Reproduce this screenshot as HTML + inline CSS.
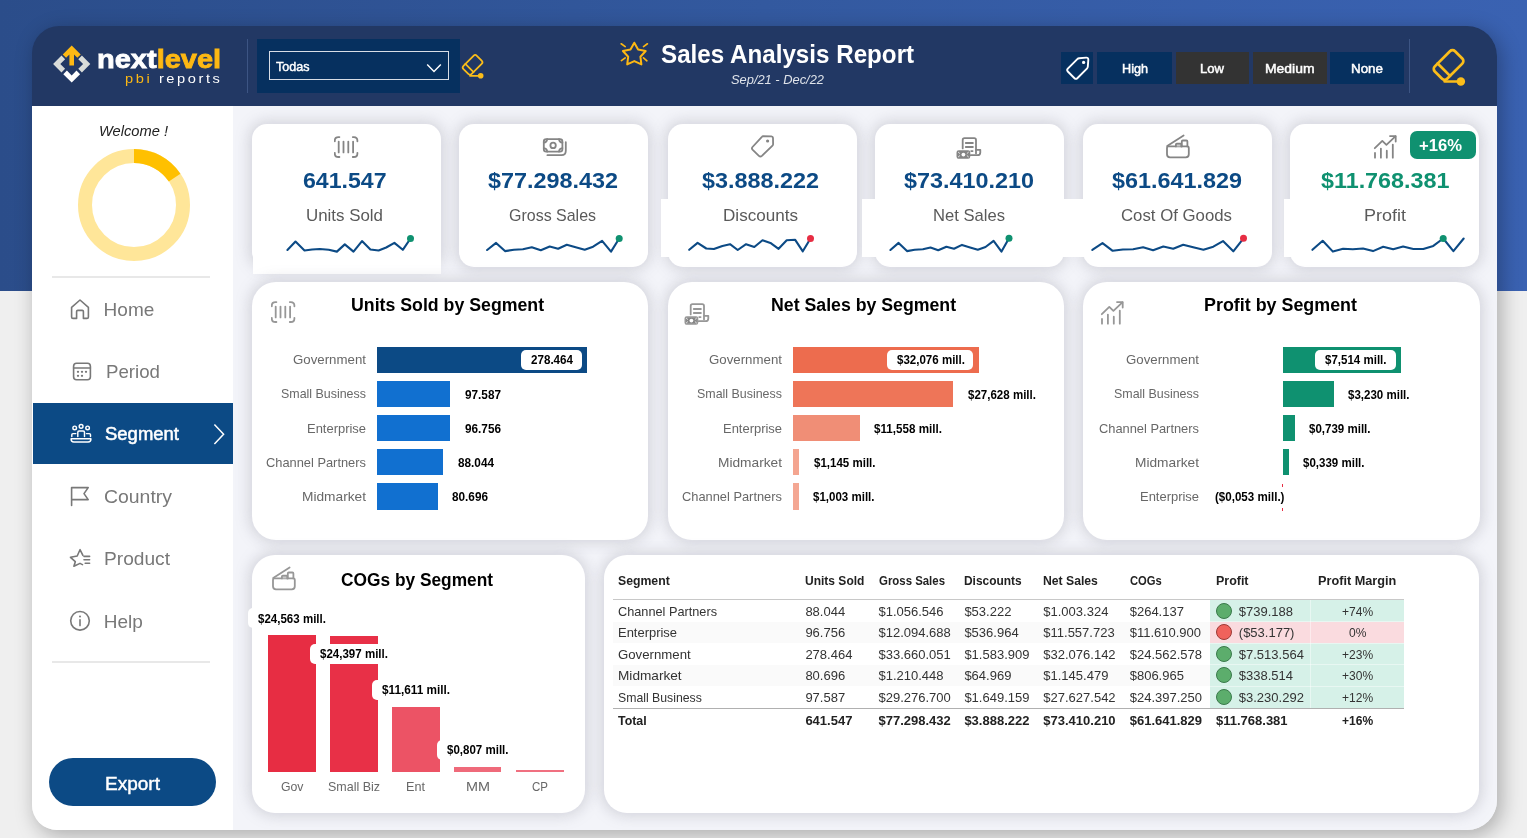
<!DOCTYPE html>
<html lang="en"><head><meta charset="utf-8"><title>Sales Analysis Report</title>
<style>
html,body{margin:0;padding:0}
body{width:1527px;height:838px;overflow:hidden;position:relative;background:#efefef;font-family:"Liberation Sans",sans-serif;}
#root{position:absolute;left:0;top:0;width:1527px;height:838px;will-change:transform;}
.r{position:absolute;display:block}
.t{position:absolute;white-space:nowrap;line-height:1;display:block;transform-origin:0 0}
</style></head>
<body>
<div id="root">
<div class="r" style="left:0;top:0;width:1527px;height:291px;background:linear-gradient(90deg,#2b4d8a 0%,#33599f 50%,#3a62b2 100%);"></div>
<div class="r" style="left:32px;top:26px;width:1465px;height:804px;border-radius:27px 30px 30px 25px;box-shadow:4px 5px 20px 1px rgba(0,0,0,.27);"></div>
<div class="r" id="panel" style="left:32px;top:26px;width:1465px;height:804px;border-radius:27px 30px 30px 25px;overflow:hidden;">
<div class="r" style="left:0;top:0;width:1465px;height:80px;background:#223864;"></div>
<div class="r" style="left:0;top:80px;width:201px;height:724px;background:#fff;"></div>
<div class="r" style="left:201px;top:80px;width:1264px;height:724px;background:#f3f4f9;"></div>
</div>
<svg class="r" style="left:52px;top:44px" width="40" height="40" viewBox="0 0 40 40">
<g transform="translate(19.7,20)">
<path d="M-18.6,0 L-10.2,-8.4 L-6.6,-4.8 L-11.4,0 L-6.6,4.8 L-10.2,8.4 Z" fill="#d9dcd9"/>
<path d="M18.6,0 L10.2,-8.4 L6.6,-4.8 L11.4,0 L6.6,4.8 L10.2,8.4 Z" fill="#d9dcd9"/>
<path d="M0,18.6 L-8.4,10.2 L-4.8,6.6 L0,11.4 L4.8,6.6 L8.4,10.2 Z" fill="#fff"/>
<path d="M0,-18.6 L-9,-9.6 L-5.6,-6.2 L-2.3,-9.5 L-2.3,1.5 L2.3,1.5 L2.3,-9.5 L5.6,-6.2 L9,-9.6 Z" fill="#fdb813"/>
</g></svg>
<span class="t" style="left:97.2px;top:46.6px;font-size:25px;font-weight:700;transform:scaleX(1.16);color:#fff;-webkit-text-stroke:0.8px #fff;">next<span style="color:#fdb813;-webkit-text-stroke:0.8px #fdb813;">level</span></span>
<span class="t" style="left:125.3px;top:72.9px;font-size:12.5px;letter-spacing:2.2px;transform:scaleX(1.17);color:#fdb813;">pbi <span style="color:#fff">reports</span></span>
<div class="r" style="left:246.5px;top:39.0px;width:1.3px;height:54.0px;background:#3d5584;"></div>
<div class="r" style="left:256.5px;top:39.0px;width:203.8px;height:53.5px;background:#06305f;"></div>
<div class="r" style="left:268.5px;top:51px;width:180px;height:28.5px;border:1.3px solid #d7dde6;box-sizing:border-box;"></div>
<span class="t" style="left:276.0px;top:60.2px;font-size:13px;color:#fff;transform:scaleX(0.966);-webkit-text-stroke:0.45px #fff;">Todas</span>
<svg class="r" style="left:425px;top:60.5px" width="18" height="14" viewBox="0 0 18 14"><path d="M2.2,3.6 L9,10.6 L15.8,3.6" fill="none" stroke="#fff" stroke-width="1.4"/></svg>
<svg class="r" style="left:459.0px;top:50.9px" width="29.4" height="29.4" viewBox="0 0 42 42"><g fill="none" stroke="#fbbd1a" stroke-width="2.50" stroke-linecap="round"><g transform="translate(19.4,19.8) rotate(45)"><rect x="-8.25" y="-13.5" width="16.5" height="27" rx="3.4"/><path d="M-8.25,6.3 L8.25,6.3"/></g><path d="M15.7,35.4 L31,35.4"/></g><circle cx="31" cy="35.4" r="4" fill="#fbbd1a"/></svg>
<svg class="r" style="left:619px;top:38.5px" width="30" height="30" viewBox="0 0 30 30"><path d="M15.3,3.7 L19.1,10.5 L26.7,12.0 L21.4,17.7 L22.4,25.4 L15.3,22.1 L8.2,25.4 L9.2,17.7 L3.9,12.0 L11.5,10.5 Z" fill="none" stroke="#fdb813" stroke-width="2" stroke-linejoin="round"/><path d="M2.2,4.8 L6.2,7.6 M28.4,4.8 L24.5,7.6 M2.4,21.6 L6.2,18.9 M27.9,21.8 L24.5,18.9" stroke="#fdb813" stroke-width="1.7" stroke-linecap="round"/></svg>
<span class="t" style="left:661.0px;top:41.1px;font-size:26px;color:#fff;font-weight:700;transform:scaleX(0.930);">Sales Analysis Report</span>
<span class="t" style="left:731.0px;top:74.0px;font-size:12.5px;color:#dfe3ea;font-style:italic;transform:scaleX(1.029);">Sep/21 - Dec/22</span>
<div class="r" style="left:1060.5px;top:51.5px;width:32.5px;height:32.0px;background:#06305f;"></div>
<svg class="r" style="left:1065px;top:54.5px" width="26" height="26" viewBox="0 0 26 26">
<path d="M14.2,3.2 L21.2,2.6 Q23.4,2.5 23.3,4.7 L22.8,11.8 Q22.7,12.9 21.9,13.7 L12.3,23.2 Q10.9,24.5 9.5,23.2 L2.8,16.5 Q1.5,15.1 2.8,13.7 L12.3,4.1 Q13.1,3.3 14.2,3.2 Z" fill="none" stroke="#fff" stroke-width="1.9"/>
<circle cx="18.6" cy="7.4" r="1.6" fill="#fff"/></svg>
<div class="r" style="left:1097.0px;top:51.5px;width:75.0px;height:32.0px;background:#06305f;"></div>
<span class="t" style="left:1121.5px;top:62.1px;font-size:13.5px;color:#fff;transform:scaleX(0.936);-webkit-text-stroke:0.5px #fff;">High</span>
<div class="r" style="left:1175.5px;top:51.5px;width:73.0px;height:32.0px;background:#333333;"></div>
<span class="t" style="left:1200.0px;top:62.1px;font-size:13.5px;color:#fff;transform:scaleX(0.969);-webkit-text-stroke:0.5px #fff;">Low</span>
<div class="r" style="left:1253.0px;top:51.5px;width:74.0px;height:32.0px;background:#333333;"></div>
<span class="t" style="left:1265.2px;top:62.1px;font-size:13.5px;color:#fff;transform:scaleX(1.031);-webkit-text-stroke:0.5px #fff;">Medium</span>
<div class="r" style="left:1330.0px;top:51.5px;width:73.5px;height:32.0px;background:#06305f;"></div>
<span class="t" style="left:1350.8px;top:62.1px;font-size:13.5px;color:#fff;transform:scaleX(0.992);-webkit-text-stroke:0.5px #fff;">None</span>
<div class="r" style="left:1409.3px;top:39.0px;width:1.2px;height:53.5px;background:#3d5584;"></div>
<svg class="r" style="left:1428.1px;top:43.9px" width="44.5" height="44.5" viewBox="0 0 42 42"><g fill="none" stroke="#fbbd1a" stroke-width="2.55" stroke-linecap="round"><g transform="translate(19.4,19.8) rotate(45)"><rect x="-8.25" y="-13.5" width="16.5" height="27" rx="3.4"/><path d="M-8.25,6.3 L8.25,6.3"/></g><path d="M15.7,35.4 L31,35.4"/></g><circle cx="31" cy="35.4" r="4" fill="#fbbd1a"/></svg>
<span class="t" style="left:98.5px;top:124.1px;font-size:14px;color:#222;font-style:italic;transform:scaleX(1.048);">Welcome !</span>
<svg class="r" style="left:74px;top:145px" width="120" height="120" viewBox="-60 -60 120 120"><circle r="49" fill="none" stroke="#ffe699" stroke-width="14"/><path d="M0,-49 A49,49 0 0 1 40.62,-27.40" fill="none" stroke="#ffc000" stroke-width="14"/></svg>
<div class="r" style="left:52.0px;top:275.6px;width:158.0px;height:2.0px;background:#e8e8e8;"></div>
<div class="r" style="left:52.0px;top:660.8px;width:158.0px;height:2.0px;background:#e8e8e8;"></div>
<div class="r" style="left:33.0px;top:403.0px;width:200.0px;height:60.5px;background:#0c4a85;"></div>
<span class="t" style="left:103.6px;top:299.8px;font-size:19px;color:#787878;">Home</span>
<span class="t" style="left:106.0px;top:362.1px;font-size:19px;color:#787878;transform:scaleX(0.983);">Period</span>
<span class="t" style="left:104.5px;top:424.3px;font-size:19px;color:#fff;transform:scaleX(0.973);-webkit-text-stroke:0.55px #fff;">Segment</span>
<span class="t" style="left:103.8px;top:487.3px;font-size:19px;color:#787878;transform:scaleX(1.022);">Country</span>
<span class="t" style="left:103.8px;top:549.3px;font-size:19px;color:#787878;transform:scaleX(1.008);">Product</span>
<span class="t" style="left:103.8px;top:612.3px;font-size:19px;color:#787878;">Help</span>
<svg class="r" style="left:69px;top:297.8px" width="22" height="22" viewBox="0 0 22 22"><g fill="none" stroke="#787878" stroke-width="1.6" stroke-linejoin="round" stroke-linecap="round"><path d="M2.6,9.4 L11,2 L19.4,9.4 L19.4,19 Q19.4,20.4 18,20.4 L14.4,20.4 L14.4,13.6 Q14.4,12.4 13.2,12.4 L8.8,12.4 Q7.6,12.4 7.6,13.6 L7.6,20.4 L4,20.4 Q2.6,20.4 2.6,19 Z"/></g></svg>
<svg class="r" style="left:72px;top:360.6px" width="20" height="21" viewBox="0 0 20 21"><g fill="none" stroke="#787878" stroke-width="1.6" stroke-linejoin="round" stroke-linecap="round"><rect x="1.6" y="2.2" width="16.8" height="16.6" rx="3"/><path d="M1.6,7 L18.4,7"/><g fill="#787878" stroke="none"><circle cx="6" cy="10.8" r="1.15"/><circle cx="10" cy="10.8" r="1.15"/><circle cx="14" cy="10.8" r="1.15"/><circle cx="6" cy="14.8" r="1.15"/><circle cx="10" cy="14.8" r="1.15"/></g></g></svg>
<svg class="r" style="left:69px;top:422px" width="24" height="22" viewBox="0 0 24 22"><g fill="none" stroke="#fff" stroke-width="1.45" stroke-linejoin="round" stroke-linecap="round"><circle cx="5.7" cy="5.9" r="1.8"/><circle cx="12.1" cy="4.3" r="1.9"/><circle cx="18.6" cy="5.9" r="1.8"/><path d="M8.8,14.6 L8.8,10.2 Q8.8,9 10,9 L14.3,9 Q15.5,9 15.5,10.2 L15.5,14.6"/><path d="M2.8,14.6 L2.8,12.8 Q2.8,11.6 4,11.6 L6.8,11.6 M21.5,14.6 L21.5,12.8 Q21.5,11.6 20.3,11.6 L17.5,11.6"/><path d="M2.1,16.7 L21.9,16.7 L21.9,17.2 Q21.9,19.9 19.2,19.9 L4.8,19.9 Q2.1,19.9 2.1,17.2 Z"/></g></svg>
<svg class="r" style="left:69px;top:485px" width="22" height="22" viewBox="0 0 22 22"><g fill="none" stroke="#787878" stroke-width="1.6" stroke-linejoin="round" stroke-linecap="round"><path d="M2.6,20.4 L2.6,2.6 L19.2,2.6 L15,8.6 L19.2,14.6 L2.6,14.6"/></g></svg>
<svg class="r" style="left:68px;top:547px" width="24" height="22" viewBox="0 0 24 22"><g fill="none" stroke="#787878" stroke-width="1.6" stroke-linejoin="round" stroke-linecap="round"><path d="M14.9,8.4 L12,2.7 L9.2,9 L2.5,10.3 L7.3,14.7 L5.9,19.3 L12,16.4 L14.5,17.6"/><path d="M16,9.4 L21.6,9.4 M16,12.8 L21.6,12.8 M17.2,16.2 L21.6,16.2"/></g></svg>
<svg class="r" style="left:69px;top:610px" width="22" height="22" viewBox="0 0 22 22"><g fill="none" stroke="#787878" stroke-width="1.6" stroke-linejoin="round" stroke-linecap="round"><circle cx="11" cy="10.8" r="9.3"/><path d="M11,9.8 L11,15.6"/><circle cx="11" cy="6.4" r="1" fill="#787878" stroke="none"/></g></svg>
<svg class="r" style="left:212px;top:422px" width="14" height="24" viewBox="0 0 14 24"><path d="M2.4,2.6 L11.6,12.3 L2.4,22" fill="none" stroke="#fff" stroke-width="1.5"/></svg>
<div class="r" style="left:49.0px;top:758.0px;width:167.0px;height:48.0px;background:#0c4a85;border-radius:24px;"></div>
<span class="t" style="left:105.0px;top:773.8px;font-size:19px;color:#fff;-webkit-text-stroke:0.45px #fff;">Export</span>
<div class="r" style="left:252.3px;top:124.0px;width:189.0px;height:143.0px;background:#fff;border-radius:15px;box-shadow:0 0 14px 3px rgba(125,126,142,.27);"></div>
<div class="r" style="left:459.3px;top:124.0px;width:189.0px;height:143.0px;background:#fff;border-radius:15px;box-shadow:0 0 14px 3px rgba(125,126,142,.27);"></div>
<div class="r" style="left:667.5px;top:124.0px;width:189.0px;height:143.0px;background:#fff;border-radius:15px;box-shadow:0 0 14px 3px rgba(125,126,142,.27);"></div>
<div class="r" style="left:875.0px;top:124.0px;width:189.0px;height:143.0px;background:#fff;border-radius:15px;box-shadow:0 0 14px 3px rgba(125,126,142,.27);"></div>
<div class="r" style="left:1082.8px;top:124.0px;width:189.0px;height:143.0px;background:#fff;border-radius:15px;box-shadow:0 0 14px 3px rgba(125,126,142,.27);"></div>
<div class="r" style="left:1290.3px;top:124.0px;width:189.0px;height:143.0px;background:#fff;border-radius:15px;box-shadow:0 0 14px 3px rgba(125,126,142,.27);"></div>
<div class="r" style="left:253.0px;top:232.0px;width:187.5px;height:41.8px;background:#fff;"></div>
<div class="r" style="left:661.0px;top:198.6px;width:66.5px;height:58.0px;background:#fff;"></div>
<div class="r" style="left:862.0px;top:198.6px;width:73.0px;height:58.0px;background:#fff;"></div>
<div class="r" style="left:1062.0px;top:198.6px;width:80.8px;height:58.0px;background:#fff;"></div>
<div class="r" style="left:1283.8px;top:198.6px;width:66.5px;height:58.0px;background:#fff;"></div>
<span class="t" style="left:302.6px;top:170.2px;font-size:22.5px;color:#0c4a85;font-weight:700;transform:scaleX(1.027);">641.547</span>
<span class="t" style="left:305.9px;top:207.1px;font-size:17px;color:#5a5a5a;transform:scaleX(0.994);">Units Sold</span>
<span class="t" style="left:487.5px;top:170.2px;font-size:22.5px;color:#0c4a85;font-weight:700;transform:scaleX(1.039);">$77.298.432</span>
<span class="t" style="left:509.0px;top:207.1px;font-size:17px;color:#5a5a5a;transform:scaleX(0.940);">Gross Sales</span>
<span class="t" style="left:702.1px;top:170.2px;font-size:22.5px;color:#0c4a85;font-weight:700;transform:scaleX(1.039);">$3.888.222</span>
<span class="t" style="left:723.1px;top:207.1px;font-size:17px;color:#5a5a5a;transform:scaleX(1.005);">Discounts</span>
<span class="t" style="left:903.6px;top:170.2px;font-size:22.5px;color:#0c4a85;font-weight:700;transform:scaleX(1.039);">$73.410.210</span>
<span class="t" style="left:932.6px;top:207.1px;font-size:17px;color:#5a5a5a;transform:scaleX(0.977);">Net Sales</span>
<span class="t" style="left:1111.7px;top:170.2px;font-size:22.5px;color:#0c4a85;font-weight:700;transform:scaleX(1.039);">$61.641.829</span>
<span class="t" style="left:1121.2px;top:207.1px;font-size:17px;color:#5a5a5a;transform:scaleX(0.987);">Cost Of Goods</span>
<span class="t" style="left:1320.6px;top:170.2px;font-size:22.5px;color:#0f9170;font-weight:700;transform:scaleX(1.037);">$11.768.381</span>
<span class="t" style="left:1363.8px;top:207.1px;font-size:17px;color:#5a5a5a;transform:scaleX(1.059);">Profit</span>
<svg class="r" style="left:0;top:0" width="1527" height="838" viewBox="0 0 1527 838">
<path d="M287.4,250.0 L295.5,241.6 L304.5,250.5 L312.1,249.5 L319.8,249.0 L328.7,249.8 L336.9,251.6 L344.8,244.4 L353.5,251.6 L362.0,241.1 L370.4,249.5 L378.6,250.5 L386.2,247.5 L394.4,242.9 L402.8,249.8 L410.5,238.5" fill="none" stroke="#0c4a85" stroke-width="2.1" stroke-linejoin="round" stroke-linecap="round"/>
<circle cx="410.5" cy="238.5" r="3.5" fill="#0f9170"/>
<path d="M487.1,250.0 L496.1,242.9 L505.0,251.1 L513.9,249.8 L522.9,249.3 L531.8,247.2 L540.8,250.3 L549.7,246.5 L558.1,248.8 L566.8,244.7 L575.7,247.2 L584.7,249.8 L593.1,246.7 L602.1,240.8 L611.0,251.6 L619.2,238.5" fill="none" stroke="#0c4a85" stroke-width="2.1" stroke-linejoin="round" stroke-linecap="round"/>
<circle cx="619.2" cy="238.5" r="3.5" fill="#0f9170"/>
<path d="M689.2,249.8 L697.6,242.9 L706.3,248.5 L713.9,249.0 L722.4,245.9 L730.0,244.2 L737.7,250.0 L746.1,244.2 L754.3,247.0 L762.5,240.3 L770.4,242.9 L778.6,248.8 L786.7,240.3 L795.2,239.8 L802.8,251.3 L810.5,238.5" fill="none" stroke="#0c4a85" stroke-width="2.1" stroke-linejoin="round" stroke-linecap="round"/>
<circle cx="810.5" cy="238.5" r="3.5" fill="#e72d43"/>
<path d="M890.4,250.0 L898.6,242.9 L907.0,251.1 L914.7,249.8 L922.9,249.3 L930.5,247.5 L938.2,250.3 L946.4,246.7 L954.0,248.8 L962.0,244.9 L970.1,247.5 L977.8,249.8 L985.5,247.0 L993.6,240.8 L1001.5,251.6 L1009.0,238.3" fill="none" stroke="#0c4a85" stroke-width="2.1" stroke-linejoin="round" stroke-linecap="round"/>
<circle cx="1009.0" cy="238.3" r="3.5" fill="#0f9170"/>
<path d="M1092.3,249.8 L1102.5,243.1 L1112.7,250.8 L1122.9,249.5 L1133.1,249.3 L1143.1,247.2 L1153.1,250.3 L1163.3,246.5 L1173.2,248.8 L1183.2,244.7 L1193.2,247.2 L1203.4,249.8 L1213.3,246.7 L1223.0,241.1 L1233.3,251.3 L1243.5,238.3" fill="none" stroke="#0c4a85" stroke-width="2.1" stroke-linejoin="round" stroke-linecap="round"/>
<circle cx="1243.5" cy="238.3" r="3.5" fill="#e72d43"/>
<path d="M1312.4,249.8 L1322.7,240.8 L1332.9,251.6 L1343.1,248.8 L1352.8,249.3 L1363.0,248.5 L1373.0,251.1 L1383.2,246.7 L1393.2,249.3 L1403.1,246.5 L1413.3,249.0 L1423.3,249.0 L1433.3,245.9 L1443.2,238.5 L1453.4,251.1 L1463.7,238.5" fill="none" stroke="#0c4a85" stroke-width="2.1" stroke-linejoin="round" stroke-linecap="round"/>
<circle cx="1443.2" cy="238.5" r="3.5" fill="#0f9170"/>
</svg>
<div class="r" style="left:1410.0px;top:131.3px;width:65.5px;height:28.2px;background:#0f9170;border-radius:7px;"></div>
<span class="t" style="left:1418.9px;top:137.3px;font-size:16.5px;color:#fff;font-weight:700;transform:scaleX(1.008);">+16%</span>
<svg class="r" style="left:334px;top:135px" width="25.0" height="24.0" viewBox="0 0 25 24"><g fill="none" stroke="#858585" stroke-width="1.8" stroke-linejoin="round" stroke-linecap="round"><path d="M5.4,2.1 L4.4,2.1 Q0.8,2.1 0.8,5.7 L0.8,6.3 M18.8,2.1 L19.8,2.1 Q23.4,2.1 23.4,5.7 L23.4,6.3 M5.4,22 L4.4,22 Q0.8,22 0.8,18.4 L0.8,17.8 M18.8,22 L19.8,22 Q23.4,22 23.4,18.4 L23.4,17.8"/><path d="M4.7,6.6 L4.7,17.4 M9.5,6.6 L9.5,17.4 M14.3,6.6 L14.3,17.4 M19.1,6.6 L19.1,17.4"/></g></svg>
<svg class="r" style="left:542px;top:137px" width="26.0" height="21.0" viewBox="0 0 26 21"><g fill="none" stroke="#858585" stroke-width="1.8" stroke-linejoin="round" stroke-linecap="round"><rect x="1.8" y="2.1" width="18.6" height="12.5" rx="2.4"/><circle cx="11.1" cy="8.4" r="2.7"/><path d="M1.8,5.6 Q4.9,5.3 5.2,2.1 M20.4,5.6 Q17.3,5.3 17,2.1 M1.8,11.1 Q4.9,11.4 5.2,14.6 M20.4,11.1 Q17.3,11.4 17,14.6"/><path d="M23.8,5.2 L23.8,13.7 Q23.8,18.2 19.5,18.2 L5.4,18.2"/></g></svg>
<svg class="r" style="left:749px;top:134px" width="26.0" height="25.0" viewBox="0 0 26 25"><g fill="none" stroke="#858585" stroke-width="1.8" stroke-linejoin="round" stroke-linecap="round"><path d="M14,2.2 L22.4,2.3 Q23.9,2.4 24,3.9 L24.1,10.2 Q24.1,11 23.5,11.6 L12.9,21.9 Q11.4,23.2 9.9,21.8 L3.5,15.6 Q2.3,14.3 3.5,13 L12.9,2.8 Q13.4,2.2 14,2.2 Z"/><circle cx="18.6" cy="7" r="1.6" fill="#858585" stroke="none"/></g></svg>
<svg class="r" style="left:956px;top:135px" width="26.0" height="25.0" viewBox="0 0 26 25"><g fill="none" stroke="#858585" stroke-width="1.8" stroke-linejoin="round" stroke-linecap="round"><path d="M6.7,13.4 L6.7,5 Q6.7,3.2 8.5,3.2 L18.2,3.2 Q20,3.2 20,5 L20,18.4"/><path d="M20,14.8 L24.3,14.8 L24.3,17.4 Q24.3,20.2 21.5,20.2 L14.8,20.2"/><path d="M9.8,8 L16.9,8 M9.8,12 L16.9,12 M15.2,16.1 L16.6,16.1"/><rect x="1.4" y="16.2" width="12" height="6.7" rx="1.3" fill="#858585"/><circle cx="7.4" cy="19.55" r="1.9" fill="#fff" stroke="none"/><path d="M2.4,17.3 L3.6,18.3 M12.4,17.3 L11.2,18.3 M2.4,21.8 L3.6,20.8 M12.4,21.8 L11.2,20.8" stroke="#fff" stroke-width="0.8"/></g></svg>
<svg class="r" style="left:1165px;top:134px" width="26.0" height="25.0" viewBox="0 0 26 25"><g fill="none" stroke="#858585" stroke-width="1.8" stroke-linejoin="round" stroke-linecap="round"><path d="M2.2,11.9 L18.6,1.5"/><path d="M3.4,12.4 L22.4,12.4 Q23.8,12.4 23.8,13.8 L23.8,20.3 Q23.8,23.3 20.8,23.3 L5,23.3 Q2,23.3 2,20.3 L2,13.8 Q2,12.4 3.4,12.4 Z"/><path d="M10.9,12.4 L10.9,10.6 Q10.9,9.7 11.8,9.7 L15.4,9.7 Q16.3,9.7 16.3,10.6 L16.3,12.4" fill="#c8c8c8"/><path d="M16.8,12.4 L16.8,7.5 Q16.8,6.5 17.8,6.5 L21.4,6.5 Q22.4,6.5 22.4,7.5 L22.4,12.4"/></g></svg>
<svg class="r" style="left:1373px;top:134px" width="26.0" height="25.0" viewBox="0 0 26 25"><g fill="none" stroke="#858585" stroke-width="1.8" stroke-linejoin="round" stroke-linecap="round"><path d="M1.8,14.2 L9.3,6.9 L13.4,10.8 L22.4,2.3"/><path d="M17,2.1 L22.7,2.1 L22.7,7.6"/><path d="M2,19 L2,23.7 M7.9,14.6 L7.9,23.7 M13.8,16.7 L13.8,23.7 M19.8,10.6 L19.8,23.7"/></g></svg>
<div class="r" style="left:252.0px;top:282.0px;width:396.0px;height:258.3px;background:#fff;border-radius:24px;box-shadow:0 0 14px 3px rgba(125,126,142,.27);"></div>
<span class="t" style="left:351.0px;top:296.3px;font-size:18px;color:#000;font-weight:700;transform:scaleX(0.985);">Units Sold by Segment</span>
<svg class="r" style="left:270.5px;top:299.5px" width="26.0" height="25.0" viewBox="0 0 26 25"><g fill="none" stroke="#979797" stroke-width="1.8" stroke-linejoin="round" stroke-linecap="round"><path d="M5.4,2.1 L4.4,2.1 Q0.8,2.1 0.8,5.7 L0.8,6.3 M18.8,2.1 L19.8,2.1 Q23.4,2.1 23.4,5.7 L23.4,6.3 M5.4,22 L4.4,22 Q0.8,22 0.8,18.4 L0.8,17.8 M18.8,22 L19.8,22 Q23.4,22 23.4,18.4 L23.4,17.8"/><path d="M4.7,6.6 L4.7,17.4 M9.5,6.6 L9.5,17.4 M14.3,6.6 L14.3,17.4 M19.1,6.6 L19.1,17.4"/></g></svg>
<span class="t" style="left:292.5px;top:353.2px;font-size:13px;color:#686868;transform:scaleX(1.020);">Government</span>
<div class="r" style="left:377.2px;top:346.5px;width:210.1px;height:26.3px;background:#0c4a85;"></div>
<span class="t" style="left:280.5px;top:387.4px;font-size:13px;color:#686868;transform:scaleX(0.956);">Small Business</span>
<div class="r" style="left:377.2px;top:380.7px;width:73.2px;height:26.3px;background:#1170d0;"></div>
<span class="t" style="left:465.0px;top:388.7px;font-size:12px;color:#000;font-weight:700;transform:scaleX(0.981);">97.587</span>
<span class="t" style="left:306.5px;top:421.6px;font-size:13px;color:#686868;transform:scaleX(0.996);">Enterprise</span>
<div class="r" style="left:377.2px;top:414.9px;width:72.5px;height:26.3px;background:#1170d0;"></div>
<span class="t" style="left:464.5px;top:422.9px;font-size:12px;color:#000;font-weight:700;transform:scaleX(0.981);">96.756</span>
<span class="t" style="left:265.5px;top:455.8px;font-size:13px;color:#686868;transform:scaleX(0.988);">Channel Partners</span>
<div class="r" style="left:377.2px;top:449.1px;width:66.0px;height:26.3px;background:#1170d0;"></div>
<span class="t" style="left:457.7px;top:457.1px;font-size:12px;color:#000;font-weight:700;transform:scaleX(0.981);">88.044</span>
<span class="t" style="left:301.5px;top:490.0px;font-size:13px;color:#686868;transform:scaleX(1.055);">Midmarket</span>
<div class="r" style="left:377.2px;top:483.3px;width:60.4px;height:26.3px;background:#1170d0;"></div>
<span class="t" style="left:452.3px;top:491.3px;font-size:12px;color:#000;font-weight:700;transform:scaleX(0.981);">80.696</span>
<div class="r" style="left:521.3px;top:349.8px;width:60.7px;height:20.2px;background:#fff;border-radius:5px;"></div>
<span class="t" style="left:530.6px;top:354.4px;font-size:12px;color:#000;font-weight:700;transform:scaleX(0.968);">278.464</span>
<div class="r" style="left:668.0px;top:282.0px;width:395.7px;height:258.3px;background:#fff;border-radius:24px;box-shadow:0 0 14px 3px rgba(125,126,142,.27);"></div>
<span class="t" style="left:771.3px;top:296.3px;font-size:18px;color:#000;font-weight:700;transform:scaleX(0.984);">Net Sales by Segment</span>
<svg class="r" style="left:683.5px;top:301.3px" width="26.0" height="25.0" viewBox="0 0 26 25"><g fill="none" stroke="#979797" stroke-width="1.8" stroke-linejoin="round" stroke-linecap="round"><path d="M6.7,13.4 L6.7,5 Q6.7,3.2 8.5,3.2 L18.2,3.2 Q20,3.2 20,5 L20,18.4"/><path d="M20,14.8 L24.3,14.8 L24.3,17.4 Q24.3,20.2 21.5,20.2 L14.8,20.2"/><path d="M9.8,8 L16.9,8 M9.8,12 L16.9,12 M15.2,16.1 L16.6,16.1"/><rect x="1.4" y="16.2" width="12" height="6.7" rx="1.3" fill="#858585"/><circle cx="7.4" cy="19.55" r="1.9" fill="#fff" stroke="none"/><path d="M2.4,17.3 L3.6,18.3 M12.4,17.3 L11.2,18.3 M2.4,21.8 L3.6,20.8 M12.4,21.8 L11.2,20.8" stroke="#fff" stroke-width="0.8"/></g></svg>
<span class="t" style="left:708.5px;top:353.2px;font-size:13px;color:#686868;transform:scaleX(1.020);">Government</span>
<div class="r" style="left:792.9px;top:346.5px;width:186.1px;height:26.3px;background:#ed6c4e;"></div>
<span class="t" style="left:696.5px;top:387.4px;font-size:13px;color:#686868;transform:scaleX(0.956);">Small Business</span>
<div class="r" style="left:792.9px;top:380.7px;width:160.1px;height:26.3px;background:#ee7558;"></div>
<span class="t" style="left:967.5px;top:388.7px;font-size:12px;color:#000;font-weight:700;transform:scaleX(0.961);">$27,628 mill.</span>
<span class="t" style="left:722.5px;top:421.6px;font-size:13px;color:#686868;transform:scaleX(0.996);">Enterprise</span>
<div class="r" style="left:792.9px;top:414.9px;width:67.1px;height:26.3px;background:#f08e76;"></div>
<span class="t" style="left:874.3px;top:422.9px;font-size:12px;color:#000;font-weight:700;transform:scaleX(0.970);">$11,558 mill.</span>
<span class="t" style="left:717.5px;top:455.8px;font-size:13px;color:#686868;transform:scaleX(1.055);">Midmarket</span>
<div class="r" style="left:792.9px;top:449.1px;width:6.5px;height:26.3px;background:#f4a590;"></div>
<span class="t" style="left:814.2px;top:457.1px;font-size:12px;color:#000;font-weight:700;transform:scaleX(0.960);">$1,145 mill.</span>
<span class="t" style="left:681.5px;top:490.0px;font-size:13px;color:#686868;transform:scaleX(0.988);">Channel Partners</span>
<div class="r" style="left:792.9px;top:483.3px;width:5.9px;height:26.3px;background:#f4a793;"></div>
<span class="t" style="left:812.9px;top:491.3px;font-size:12px;color:#000;font-weight:700;transform:scaleX(0.960);">$1,003 mill.</span>
<div class="r" style="left:886.7px;top:349.8px;width:86.7px;height:20.2px;background:#fff;border-radius:5px;"></div>
<span class="t" style="left:896.5px;top:354.4px;font-size:12px;color:#000;font-weight:700;transform:scaleX(0.961);">$32,076 mill.</span>
<div class="r" style="left:1083.0px;top:282.0px;width:396.6px;height:258.3px;background:#fff;border-radius:24px;box-shadow:0 0 14px 3px rgba(125,126,142,.27);"></div>
<div class="r" style="left:1282.3px;top:483.5px;width:0;height:27px;border-left:1.2px dashed #e72d43;"></div>
<div class="r" style="left:1213.0px;top:486.5px;width:73.5px;height:21.0px;background:#fff;"></div>
<span class="t" style="left:1204.2px;top:296.3px;font-size:18px;color:#000;font-weight:700;transform:scaleX(0.993);">Profit by Segment</span>
<svg class="r" style="left:1099.5px;top:299.5px" width="26.0" height="25.0" viewBox="0 0 26 25"><g fill="none" stroke="#979797" stroke-width="1.8" stroke-linejoin="round" stroke-linecap="round"><path d="M1.8,14.2 L9.3,6.9 L13.4,10.8 L22.4,2.3"/><path d="M17,2.1 L22.7,2.1 L22.7,7.6"/><path d="M2,19 L2,23.7 M7.9,14.6 L7.9,23.7 M13.8,16.7 L13.8,23.7 M19.8,10.6 L19.8,23.7"/></g></svg>
<span class="t" style="left:1125.7px;top:353.2px;font-size:13px;color:#686868;transform:scaleX(1.020);">Government</span>
<div class="r" style="left:1283.0px;top:346.5px;width:117.9px;height:26.3px;background:#0f9170;"></div>
<span class="t" style="left:1113.7px;top:387.4px;font-size:13px;color:#686868;transform:scaleX(0.956);">Small Business</span>
<div class="r" style="left:1283.0px;top:380.7px;width:50.9px;height:26.3px;background:#0f9170;"></div>
<span class="t" style="left:1348.4px;top:388.7px;font-size:12px;color:#000;font-weight:700;transform:scaleX(0.960);">$3,230 mill.</span>
<span class="t" style="left:1098.7px;top:421.6px;font-size:13px;color:#686868;transform:scaleX(0.988);">Channel Partners</span>
<div class="r" style="left:1283.0px;top:414.9px;width:11.8px;height:26.3px;background:#0f9170;"></div>
<span class="t" style="left:1309.3px;top:422.9px;font-size:12px;color:#000;font-weight:700;transform:scaleX(0.960);">$0,739 mill.</span>
<span class="t" style="left:1134.7px;top:455.8px;font-size:13px;color:#686868;transform:scaleX(1.055);">Midmarket</span>
<div class="r" style="left:1283.0px;top:449.1px;width:5.6px;height:26.3px;background:#0f9170;"></div>
<span class="t" style="left:1303.0px;top:457.1px;font-size:12px;color:#000;font-weight:700;transform:scaleX(0.960);">$0,339 mill.</span>
<span class="t" style="left:1139.7px;top:490.0px;font-size:13px;color:#686868;transform:scaleX(0.996);">Enterprise</span>
<span class="t" style="left:1215.0px;top:491.3px;font-size:12px;color:#000;font-weight:700;transform:scaleX(0.964);">($0,053 mill.)</span>
<div class="r" style="left:1314.9px;top:349.8px;width:81.1px;height:20.2px;background:#fff;border-radius:5px;"></div>
<span class="t" style="left:1324.8px;top:354.4px;font-size:12px;color:#000;font-weight:700;transform:scaleX(0.960);">$7,514 mill.</span>
<div class="r" style="left:252.2px;top:555.0px;width:332.8px;height:258.4px;background:#fff;border-radius:23px;box-shadow:0 0 14px 3px rgba(125,126,142,.27);"></div>
<span class="t" style="left:340.5px;top:571.3px;font-size:18px;color:#000;font-weight:700;transform:scaleX(0.962);">COGs by Segment</span>
<svg class="r" style="left:270.5px;top:566px" width="26.0" height="25.0" viewBox="0 0 26 25"><g fill="none" stroke="#979797" stroke-width="1.8" stroke-linejoin="round" stroke-linecap="round"><path d="M2.2,11.9 L18.6,1.5"/><path d="M3.4,12.4 L22.4,12.4 Q23.8,12.4 23.8,13.8 L23.8,20.3 Q23.8,23.3 20.8,23.3 L5,23.3 Q2,23.3 2,20.3 L2,13.8 Q2,12.4 3.4,12.4 Z"/><path d="M10.9,12.4 L10.9,10.6 Q10.9,9.7 11.8,9.7 L15.4,9.7 Q16.3,9.7 16.3,10.6 L16.3,12.4" fill="#c8c8c8"/><path d="M16.8,12.4 L16.8,7.5 Q16.8,6.5 17.8,6.5 L21.4,6.5 Q22.4,6.5 22.4,7.5 L22.4,12.4"/></g></svg>
<div class="r" style="left:268.0px;top:634.8px;width:47.8px;height:137.2px;background:#e72d43;"></div>
<span class="t" style="left:280.6px;top:780.2px;font-size:13px;color:#686868;transform:scaleX(0.944);">Gov</span>
<div class="r" style="left:329.8px;top:635.9px;width:47.9px;height:136.1px;background:#e83047;"></div>
<span class="t" style="left:327.8px;top:780.2px;font-size:13px;color:#686868;transform:scaleX(0.960);">Small Biz</span>
<div class="r" style="left:391.7px;top:706.8px;width:47.9px;height:65.2px;background:#ec5365;"></div>
<span class="t" style="left:406.1px;top:780.2px;font-size:13px;color:#686868;transform:scaleX(0.974);">Ent</span>
<div class="r" style="left:453.9px;top:767.3px;width:47.5px;height:4.7px;background:#ef6a7a;"></div>
<span class="t" style="left:465.6px;top:780.2px;font-size:13px;color:#686868;transform:scaleX(1.108);">MM</span>
<div class="r" style="left:516.0px;top:770.4px;width:47.7px;height:1.6px;background:#f07080;"></div>
<span class="t" style="left:531.9px;top:780.2px;font-size:13px;color:#686868;transform:scaleX(0.886);">CP</span>
<div class="r" style="left:247.7px;top:608.4px;width:88.0px;height:20.0px;background:#fff;border-radius:5px;"></div>
<span class="t" style="left:257.7px;top:612.8px;font-size:12px;color:#000;font-weight:700;transform:scaleX(0.961);">$24,563 mill.</span>
<div class="r" style="left:309.9px;top:644.0px;width:88.0px;height:20.0px;background:#fff;border-radius:5px;"></div>
<span class="t" style="left:319.9px;top:648.4px;font-size:12px;color:#000;font-weight:700;transform:scaleX(0.961);">$24,397 mill.</span>
<div class="r" style="left:372.0px;top:679.7px;width:88.0px;height:20.0px;background:#fff;border-radius:5px;"></div>
<span class="t" style="left:382.0px;top:684.1px;font-size:12px;color:#000;font-weight:700;transform:scaleX(0.980);">$11,611 mill.</span>
<div class="r" style="left:436.7px;top:739.8px;width:81.5px;height:20.0px;background:#fff;border-radius:5px;"></div>
<span class="t" style="left:446.7px;top:744.2px;font-size:12px;color:#000;font-weight:700;transform:scaleX(0.960);">$0,807 mill.</span>
<div class="r" style="left:604.4px;top:555.0px;width:875.1px;height:258.4px;background:#fff;border-radius:23px;box-shadow:0 0 14px 3px rgba(125,126,142,.27);"></div>
<span class="t" style="left:618.4px;top:573.5px;font-size:13px;color:#222;font-weight:700;transform:scaleX(0.942);">Segment</span>
<span class="t" style="left:805.4px;top:573.5px;font-size:13px;color:#222;font-weight:700;transform:scaleX(0.924);">Units Sold</span>
<span class="t" style="left:878.5px;top:573.5px;font-size:13px;color:#222;font-weight:700;transform:scaleX(0.878);">Gross Sales</span>
<span class="t" style="left:964.4px;top:573.5px;font-size:13px;color:#222;font-weight:700;transform:scaleX(0.918);">Discounts</span>
<span class="t" style="left:1043.3px;top:573.5px;font-size:13px;color:#222;font-weight:700;transform:scaleX(0.938);">Net Sales</span>
<span class="t" style="left:1129.7px;top:573.5px;font-size:13px;color:#222;font-weight:700;transform:scaleX(0.863);">COGs</span>
<span class="t" style="left:1216.0px;top:573.5px;font-size:13px;color:#222;font-weight:700;transform:scaleX(0.958);">Profit</span>
<span class="t" style="left:1318.2px;top:573.5px;font-size:13px;color:#222;font-weight:700;transform:scaleX(0.977);">Profit Margin</span>
<div class="r" style="left:612.5px;top:598.8px;width:791.1px;height:1.0px;background:#c8c8c8;"></div>
<div class="r" style="left:1210.0px;top:600.0px;width:193.6px;height:21.8px;background:#d6f1e8;"></div>
<div class="r" style="left:1215.8px;top:602.6px;width:16px;height:16px;border-radius:50%;box-sizing:border-box;background:#5cad6c;border:1px solid #3a7a4b;"></div>
<span class="t" style="left:618.4px;top:604.6px;font-size:13px;color:#333;transform:scaleX(0.979);">Channel Partners</span>
<span class="t" style="left:805.4px;top:604.6px;font-size:13px;color:#333;">88.044</span>
<span class="t" style="left:878.5px;top:604.6px;font-size:13px;color:#333;">$1.056.546</span>
<span class="t" style="left:964.4px;top:604.6px;font-size:13px;color:#333;">$53.222</span>
<span class="t" style="left:1043.3px;top:604.6px;font-size:13px;color:#333;">$1.003.324</span>
<span class="t" style="left:1129.7px;top:604.6px;font-size:13px;color:#333;">$264.137</span>
<span class="t" style="left:1238.8px;top:604.6px;font-size:13px;color:#333;">$739.188</span>
<span class="t" style="left:1341.9px;top:604.6px;font-size:13px;color:#333;transform:scaleX(0.925);">+74%</span>
<div class="r" style="left:612.5px;top:621.8px;width:597.5px;height:21.5px;background:#fafafa;"></div>
<div class="r" style="left:1210.0px;top:621.8px;width:193.6px;height:21.5px;background:#fadbdf;"></div>
<div class="r" style="left:1215.8px;top:623.6px;width:16px;height:16px;border-radius:50%;box-sizing:border-box;background:#f0625c;border:1px solid #9c3a36;"></div>
<span class="t" style="left:618.4px;top:625.6px;font-size:13px;color:#333;transform:scaleX(0.996);">Enterprise</span>
<span class="t" style="left:805.4px;top:625.6px;font-size:13px;color:#333;">96.756</span>
<span class="t" style="left:878.5px;top:625.6px;font-size:13px;color:#333;">$12.094.688</span>
<span class="t" style="left:964.4px;top:625.6px;font-size:13px;color:#333;">$536.964</span>
<span class="t" style="left:1043.3px;top:625.6px;font-size:13px;color:#333;">$11.557.723</span>
<span class="t" style="left:1129.7px;top:625.6px;font-size:13px;color:#333;">$11.610.900</span>
<span class="t" style="left:1238.8px;top:625.6px;font-size:13px;color:#333;">($53.177)</span>
<span class="t" style="left:1348.7px;top:625.6px;font-size:13px;color:#333;transform:scaleX(0.925);">0%</span>
<div class="r" style="left:1210.0px;top:643.3px;width:193.6px;height:21.5px;background:#d6f1e8;"></div>
<div class="r" style="left:1215.8px;top:645.6px;width:16px;height:16px;border-radius:50%;box-sizing:border-box;background:#5cad6c;border:1px solid #3a7a4b;"></div>
<span class="t" style="left:618.4px;top:647.6px;font-size:13px;color:#333;transform:scaleX(1.016);">Government</span>
<span class="t" style="left:805.4px;top:647.6px;font-size:13px;color:#333;">278.464</span>
<span class="t" style="left:878.5px;top:647.6px;font-size:13px;color:#333;">$33.660.051</span>
<span class="t" style="left:964.4px;top:647.6px;font-size:13px;color:#333;">$1.583.909</span>
<span class="t" style="left:1043.3px;top:647.6px;font-size:13px;color:#333;">$32.076.142</span>
<span class="t" style="left:1129.7px;top:647.6px;font-size:13px;color:#333;">$24.562.578</span>
<span class="t" style="left:1238.8px;top:647.6px;font-size:13px;color:#333;">$7.513.564</span>
<span class="t" style="left:1341.9px;top:647.6px;font-size:13px;color:#333;transform:scaleX(0.925);">+23%</span>
<div class="r" style="left:612.5px;top:664.8px;width:597.5px;height:21.5px;background:#fafafa;"></div>
<div class="r" style="left:1210.0px;top:664.8px;width:193.6px;height:21.5px;background:#d6f1e8;"></div>
<div class="r" style="left:1215.8px;top:666.6px;width:16px;height:16px;border-radius:50%;box-sizing:border-box;background:#5cad6c;border:1px solid #3a7a4b;"></div>
<span class="t" style="left:618.4px;top:668.6px;font-size:13px;color:#333;transform:scaleX(1.048);">Midmarket</span>
<span class="t" style="left:805.4px;top:668.6px;font-size:13px;color:#333;">80.696</span>
<span class="t" style="left:878.5px;top:668.6px;font-size:13px;color:#333;">$1.210.448</span>
<span class="t" style="left:964.4px;top:668.6px;font-size:13px;color:#333;">$64.969</span>
<span class="t" style="left:1043.3px;top:668.6px;font-size:13px;color:#333;">$1.145.479</span>
<span class="t" style="left:1129.7px;top:668.6px;font-size:13px;color:#333;">$806.965</span>
<span class="t" style="left:1238.8px;top:668.6px;font-size:13px;color:#333;">$338.514</span>
<span class="t" style="left:1341.9px;top:668.6px;font-size:13px;color:#333;transform:scaleX(0.925);">+30%</span>
<div class="r" style="left:1210.0px;top:686.3px;width:193.6px;height:21.5px;background:#d6f1e8;"></div>
<div class="r" style="left:1215.8px;top:688.6px;width:16px;height:16px;border-radius:50%;box-sizing:border-box;background:#5cad6c;border:1px solid #3a7a4b;"></div>
<span class="t" style="left:618.4px;top:690.6px;font-size:13px;color:#333;transform:scaleX(0.944);">Small Business</span>
<span class="t" style="left:805.4px;top:690.6px;font-size:13px;color:#333;">97.587</span>
<span class="t" style="left:878.5px;top:690.6px;font-size:13px;color:#333;">$29.276.700</span>
<span class="t" style="left:964.4px;top:690.6px;font-size:13px;color:#333;">$1.649.159</span>
<span class="t" style="left:1043.3px;top:690.6px;font-size:13px;color:#333;">$27.627.542</span>
<span class="t" style="left:1129.7px;top:690.6px;font-size:13px;color:#333;">$24.397.250</span>
<span class="t" style="left:1238.8px;top:690.6px;font-size:13px;color:#333;">$3.230.292</span>
<span class="t" style="left:1341.9px;top:690.6px;font-size:13px;color:#333;transform:scaleX(0.925);">+12%</span>
<div class="r" style="left:1210.0px;top:621.3px;width:193.6px;height:1.0px;background:rgba(255,255,255,.45);"></div>
<div class="r" style="left:1210.0px;top:642.8px;width:193.6px;height:1.0px;background:rgba(255,255,255,.45);"></div>
<div class="r" style="left:1210.0px;top:664.3px;width:193.6px;height:1.0px;background:rgba(255,255,255,.45);"></div>
<div class="r" style="left:1210.0px;top:685.8px;width:193.6px;height:1.0px;background:rgba(255,255,255,.45);"></div>
<div class="r" style="left:1310.4px;top:600.0px;width:1.0px;height:107.8px;background:rgba(255,255,255,.45);"></div>
<div class="r" style="left:612.5px;top:707.8px;width:791.1px;height:1.0px;background:#b0b0b0;"></div>
<span class="t" style="left:618.4px;top:714.0px;font-size:13px;color:#222;font-weight:700;transform:scaleX(0.954);">Total</span>
<span class="t" style="left:805.4px;top:714.0px;font-size:13px;color:#222;font-weight:700;">641.547</span>
<span class="t" style="left:878.5px;top:714.0px;font-size:13px;color:#222;font-weight:700;">$77.298.432</span>
<span class="t" style="left:964.4px;top:714.0px;font-size:13px;color:#222;font-weight:700;">$3.888.222</span>
<span class="t" style="left:1043.3px;top:714.0px;font-size:13px;color:#222;font-weight:700;">$73.410.210</span>
<span class="t" style="left:1129.7px;top:714.0px;font-size:13px;color:#222;font-weight:700;">$61.641.829</span>
<span class="t" style="left:1216.0px;top:714.0px;font-size:13px;color:#222;font-weight:700;">$11.768.381</span>
<span class="t" style="left:1341.9px;top:714.0px;font-size:13px;color:#222;font-weight:700;transform:scaleX(0.925);">+16%</span>
</div>
</body></html>
